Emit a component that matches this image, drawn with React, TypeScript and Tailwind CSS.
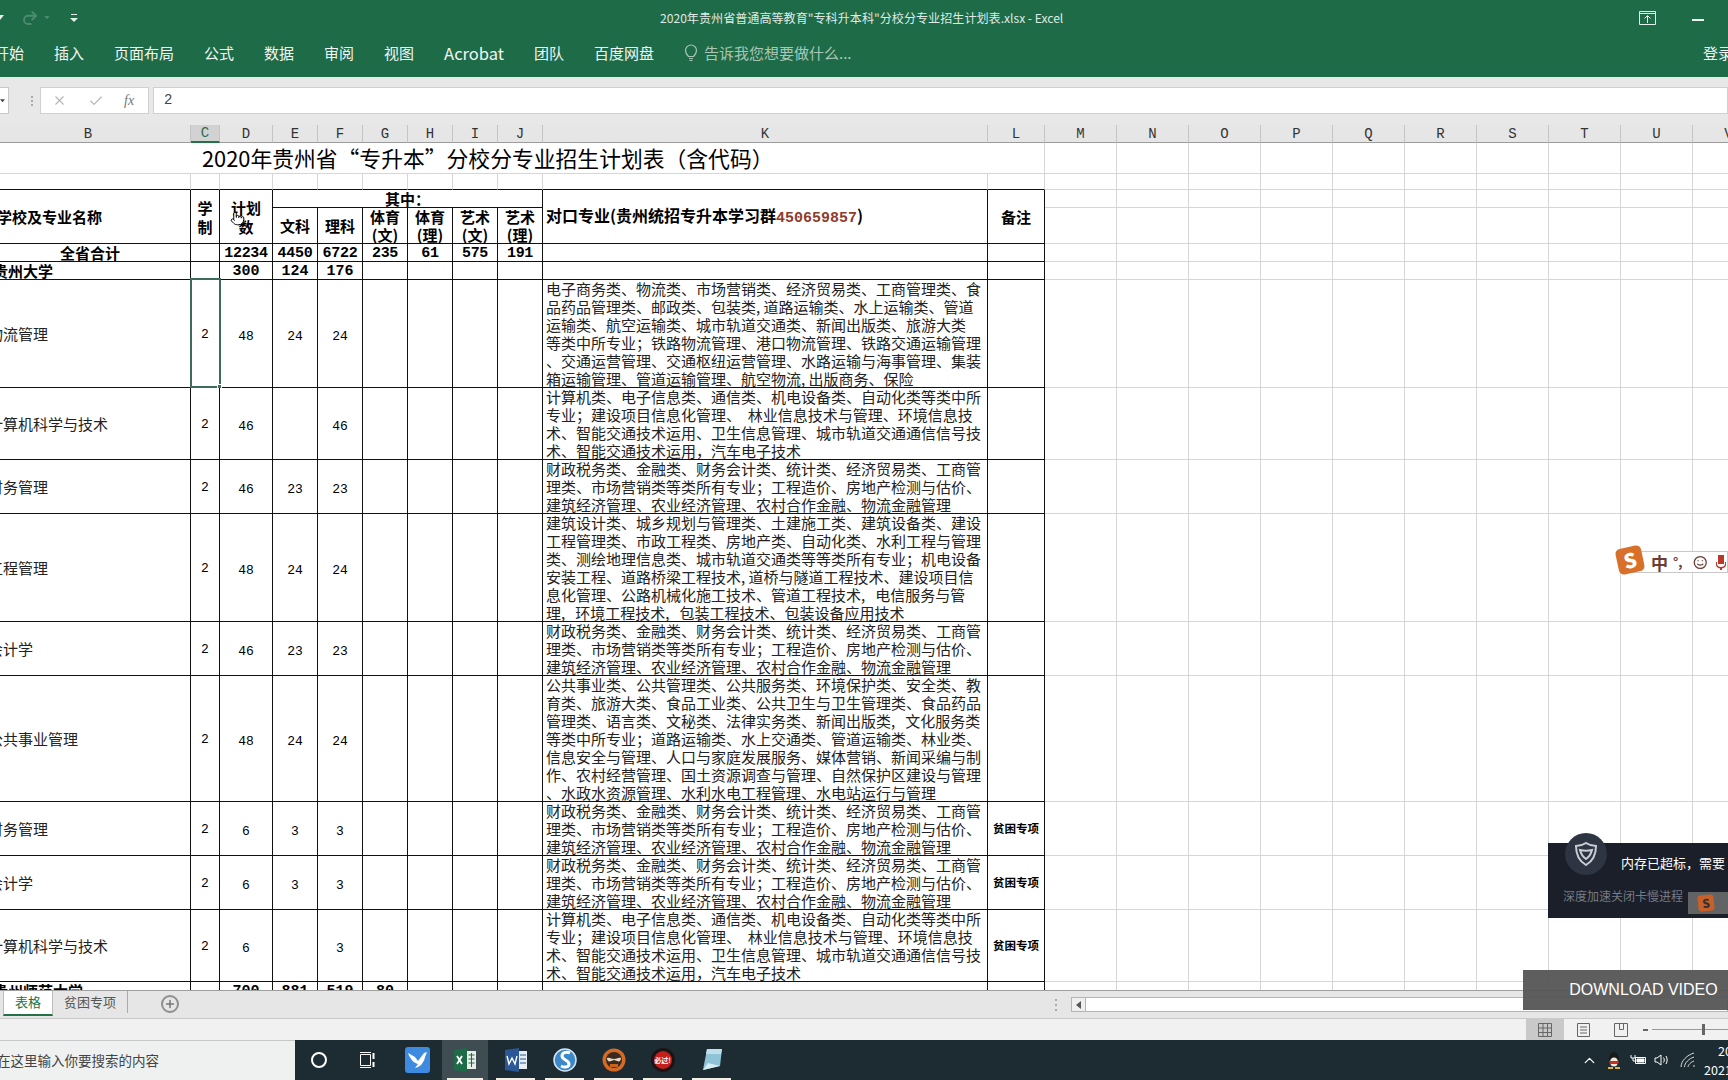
import { Check, ChevronUp, Plus, Pointer, Redo2, X } from 'lucide-react'
import type { ReactNode } from 'react'

const FINANCE = [
  '财政税务类、金融类、财务会计类、统计类、经济贸易类、工商管',
  '理类、市场营销类等类所有专业；工程造价、房地产检测与估价、',
  '建筑经济管理、农业经济管理、农村合作金融、物流金融管理'
]

const COMPUTER = [
  '计算机类、电子信息类、通信类、机电设备类、自动化类等类中所',
  '专业；建设项目信息化管理、  林业信息技术与管理、环境信息技',
  '术、智能交通技术运用、卫生信息管理、城市轨道交通通信信号技',
  '术、智能交通技术运用，汽车电子技术'
]

const rows = [
  {
    name: '物流管理', plan: '48', arts: '24', science: '24', height: 'h-[108px]', selected: true,
    lines: [
      '电子商务类、物流类、市场营销类、经济贸易类、工商管理类、食',
      '品药品管理类、邮政类、包装类, 道路运输类、水上运输类、管道',
      '运输类、航空运输类、城市轨道交通类、新闻出版类、旅游大类',
      '等类中所专业；铁路物流管理、港口物流管理、铁路交通运输管理',
      '、交通运营管理、交通枢纽运营管理、水路运输与海事管理、集装',
      '箱运输管理、管道运输管理、航空物流, 出版商务、保险'
    ]
  },
  { name: '计算机科学与技术', plan: '46', arts: '', science: '46', height: 'h-[72px]', lines: COMPUTER },
  { name: '财务管理', plan: '46', arts: '23', science: '23', height: 'h-[54px]', lines: FINANCE },
  {
    name: '工程管理', plan: '48', arts: '24', science: '24', height: 'h-[108px]',
    lines: [
      '建筑设计类、城乡规划与管理类、土建施工类、建筑设备类、建设',
      '工程管理类、市政工程类、房地产类、自动化类、水利工程与管理',
      '类、测绘地理信息类、城市轨道交通类等等类所有专业；机电设备',
      '安装工程、道路桥梁工程技术, 道桥与隧道工程技术、建设项目信',
      '息化管理、公路机械化施工技术、管道工程技术,   电信服务与管',
      '理,   环境工程技术,   包装工程技术、包装设备应用技术'
    ]
  },
  { name: '会计学', plan: '46', arts: '23', science: '23', height: 'h-[54px]', lines: FINANCE },
  {
    name: '公共事业管理', plan: '48', arts: '24', science: '24', height: 'h-[126px]',
    lines: [
      '公共事业类、公共管理类、公共服务类、环境保护类、安全类、教',
      '育类、旅游大类、食品工业类、公共卫生与卫生管理类、食品药品',
      '管理类、语言类、文秘类、法律实务类、新闻出版类,   文化服务类',
      '等类中所专业；道路运输类、水上交通类、管道运输类、林业类、',
      '信息安全与管理、人口与家庭发展服务、媒体营销、新闻采编与制',
      '作、农村经营管理、国土资源调查与管理、自然保护区建设与管理',
      '、水政水资源管理、水利水电工程管理、水电站运行与管理'
    ]
  },
  { name: '财务管理', plan: '6', arts: '3', science: '3', height: 'h-[54px]', lines: FINANCE, note: '贫困专项' },
  { name: '会计学', plan: '6', arts: '3', science: '3', height: 'h-[54px]', lines: FINANCE, note: '贫困专项' },
  { name: '计算机科学与技术', plan: '6', arts: '', science: '3', height: 'h-[72px]', lines: COMPUTER, note: '贫困专项' }
]

const columns = [
  { label: 'B', width: 'w-[191px]' },
  { label: 'C', width: 'w-[29px]' },
  { label: 'D', width: 'w-[53px]' },
  { label: 'E', width: 'w-[45px]' },
  { label: 'F', width: 'w-[45px]' },
  { label: 'G', width: 'w-[45px]' },
  { label: 'H', width: 'w-[45px]' },
  { label: 'I', width: 'w-[45px]' },
  { label: 'J', width: 'w-[45px]' },
  { label: 'K', width: 'w-[445px]' },
  { label: 'L', width: 'w-[57px]' },
  { label: 'M', width: 'w-[72px]' },
  { label: 'N', width: 'w-[72px]' },
  { label: 'O', width: 'w-[72px]' },
  { label: 'P', width: 'w-[72px]' },
  { label: 'Q', width: 'w-[72px]' },
  { label: 'R', width: 'w-[72px]' },
  { label: 'S', width: 'w-[72px]' },
  { label: 'T', width: 'w-[72px]' },
  { label: 'U', width: 'w-[72px]' },
  { label: 'V', width: 'w-[72px]' }
]

const empties = columns.slice(11)

const grid = 'border-r border-b border-[#d6d6d6]'
const line = 'border-r border-b border-[#111]'
const mono = "font-['Liberation_Mono','Noto_Sans_CJK_SC',monospace]"

const GridCells = () => (
  <>
    {empties.map((c) => (
      <td key={c.label} className={grid} />
    ))}
  </>
)

const Num = ({ value, bold }: { value?: string; bold?: boolean }) => (
  <td className={`${line} p-0 text-center leading-[17px] ${mono} ${bold ? 'text-[15px] font-bold' : 'text-[13px]'} ${value && !bold ? 'pt-[3px]' : ''}`}>
    <span className="relative top-px">{value}</span>
  </td>
)

const Head = ({ children, className = '', rowSpan, colSpan }: { children?: ReactNode; className?: string; rowSpan?: number; colSpan?: number }) => (
  <td rowSpan={rowSpan} colSpan={colSpan} className={`${line} p-0 text-center text-[15px] leading-[17px] font-bold ${className}`}>
    {children}
  </td>
)

const TwoLines = ({ top, bottom }: { top: string; bottom: string }) => (
  <Head>
    <div className="leading-[17.5px]">
      {top}
      <br />
      {bottom}
    </div>
  </Head>
)

const Sheet = () => (
  <div className="h-[865px] shrink-0 overflow-hidden bg-white">
    <table className="w-[1764px] table-fixed border-separate border-spacing-0 text-black">
      <colgroup>
        {columns.map((c) => (
          <col key={c.label} className={c.width} />
        ))}
      </colgroup>
      <tbody>
        <tr className="h-[18px]">
          {columns.map((c, i) => (
            <td
              key={c.label}
              className={`border-r border-b border-r-[#c4c4c4] border-b-[#9b9b9b] p-0 text-center text-[14px] leading-[16px] ${mono} ${
                c.label === 'C' ? 'border-b-2 border-b-[#217346] bg-[#d2d2d2] text-[#2f6a50]' : 'bg-[#e6e6e6] text-[#333]'
              } ${i === 0 ? 'pr-[14px]' : ''}`}
            >
              {c.label}
            </td>
          ))}
        </tr>
        <tr className="h-[31px]">
          <td colSpan={11} className={`${grid} p-0 pl-[202px] text-[21.8px] leading-[30px] whitespace-nowrap`}>
            2020年贵州省“专升本”分校分专业招生计划表（含代码）
          </td>
          <GridCells />
        </tr>
        <tr className="h-[16px]">
          {columns.slice(0, 11).map((c) => (
            <td key={c.label} className="border-r border-b border-r-[#d6d6d6] border-b-[#111]" />
          ))}
          <GridCells />
        </tr>
        <tr className="h-[18px]">
          <Head rowSpan={2} className="text-left">
            <span className="-ml-[3px] block whitespace-nowrap">学校及专业名称</span>
          </Head>
          <Head rowSpan={2}>
            <div className="leading-[19px]">
              学<br />制
            </div>
          </Head>
          <Head rowSpan={2} className="relative">
            <div className="leading-[19px]">
              计划<br />数
            </div>
            <Pointer size={15} strokeWidth={1.6} className="absolute top-[21px] left-[10px] fill-white text-black" />
          </Head>
          <Head colSpan={6}>其中：</Head>
          <Head rowSpan={2} className="pl-[3px] text-left text-[16px] whitespace-nowrap">
            对口专业(贵州统招专升本学习群<span className={`text-[15px] text-[#8f3b2b] ${mono}`}>450659857</span>)
          </Head>
          <Head rowSpan={2}>备注</Head>
          <GridCells />
        </tr>
        <tr className="h-[36px]">
          <Head>文科</Head>
          <Head>理科</Head>
          <TwoLines top="体育" bottom="(文)" />
          <TwoLines top="体育" bottom="(理)" />
          <TwoLines top="艺术" bottom="(文)" />
          <TwoLines top="艺术" bottom="(理)" />
          <GridCells />
        </tr>
        <tr className="h-[18px]">
          <Head className="pr-[10px]">全省合计</Head>
          <Head />
          {['12234', '4450', '6722', '235', '61', '575', '191'].map((v) => (
            <td key={v} className={`${line} p-0 text-center text-[15px] leading-[17px] font-bold tracking-[-0.3px] ${mono}`}>
              <span className="relative top-px">{v}</span>
            </td>
          ))}
          <Head />
          <Head />
          <GridCells />
        </tr>
        <tr className="h-[18px]">
          <Head className="text-left">
            <span className="-ml-[7px] block whitespace-nowrap">贵州大学</span>
          </Head>
          <Head />
          <Num bold value="300" />
          <Num bold value="124" />
          <Num bold value="176" />
          <Num />
          <Num />
          <Num />
          <Num />
          <Head />
          <Head />
          <GridCells />
        </tr>
        {rows.map((r, i) => (
          <tr key={i} className={r.height}>
            <td className={`${line} p-0 pt-[2px] text-[15px] text-[#222]`}>
              <span className="-ml-[12px] block whitespace-nowrap">{r.name}</span>
            </td>
            <td className={`${line} relative p-0 pt-[3px] text-center text-[13px] ${mono}`}>
              2
              {r.selected && (
                <div className="absolute -top-[2px] -left-[1px] h-[110px] w-[31px] border-2 border-[#3f6b5c]">
                  <div className="absolute -right-[3px] -bottom-[3px] h-[5px] w-[5px] border border-white bg-[#3f6b5c]" />
                </div>
              )}
            </td>
            <Num value={r.plan} />
            <Num value={r.arts} />
            <Num value={r.science} />
            <Num />
            <Num />
            <Num />
            <Num />
            <td className={`${line} p-0 pl-[3px] align-top text-[15px] leading-[18px] text-[#222]`}>
              <div className="-mb-px whitespace-pre">
                {r.lines.map((l, j) => (
                  <div key={j}>{l}</div>
                ))}
              </div>
            </td>
            <td className={`${line} p-0 text-center text-[11.5px] font-bold`}>{r.note}</td>
            <GridCells />
          </tr>
        ))}
        <tr className="h-[18px]">
          <Head className="text-left">
            <span className="-ml-[7px] block whitespace-nowrap">贵州师范大学</span>
          </Head>
          <Head />
          <Num bold value="700" />
          <Num bold value="881" />
          <Num bold value="519" />
          <Num bold value="80" />
          <Num />
          <Num />
          <Num />
          <Head />
          <Head />
          <GridCells />
        </tr>
      </tbody>
    </table>
  </div>
)

const menus = ['插入', '页面布局', '公式', '数据', '审阅', '视图']
const moreMenus = ['团队', '百度网盘']

const Ribbon = () => (
  <div className="relative h-[77px] shrink-0 bg-[#1e6b48] text-white">
    <div className="flex h-[36px] items-center">
      <svg width="8" height="6" viewBox="0 0 8 6" className="-ml-[4px] fill-[#e8f0ec]"><path d="M0 0h8L4 5z" /></svg>
      <Redo2 size={18} strokeWidth={2.4} className="ml-[17px] text-[#4d8b6e]" />
      <svg width="6" height="4" viewBox="0 0 8 6" className="ml-[5px] fill-[#4d8b6e]"><path d="M0 0h8L4 5z" /></svg>
      <svg width="8" height="11" viewBox="0 0 8 11" className="ml-[20px] fill-[#e8f0ec]"><path d="M1 1h6v1H1zM0 5h8L4 9z" /></svg>
      <div className="absolute left-[660px] text-[12.1px] whitespace-nowrap text-[#dfeae5]">
        2020年贵州省普通高等教育"专科升本科"分校分专业招生计划表.xlsx - Excel
      </div>
      <svg width="17" height="14" viewBox="0 0 17 14" fill="none" stroke="#e8f0ec" className="mr-[72px] ml-auto">
        <path d="M.5.5h16v13H.5zM.5 2.5h16M8.500 12V5M5.500 7.500l3-3 3 3" />
      </svg>
      <div className="absolute top-[19px] left-[1692px] h-[2px] w-[12px] bg-[#eef4f1]" />
    </div>
    <div className="flex h-[34px] items-center gap-[30px] text-[15px] whitespace-nowrap text-[#f2f6f4]">
      <span className="-ml-[6px]">开始</span>
      {menus.map((m) => (
        <span key={m}>{m}</span>
      ))}
      <span className="text-[16.5px]">Acrobat</span>
      {moreMenus.map((m) => (
        <span key={m}>{m}</span>
      ))}
      <span className="flex items-center gap-[6px] text-[#a9c6b8]">
        <svg width="14" height="18" viewBox="0 0 14 18" fill="none" stroke="currentColor" strokeWidth="1.2">
          <path d="M4.500 12.500C3 11 1.500 9.500 1.500 6.500a5.500 5.500 0 0 1 11 0c0 3-1.500 4.500-3 6zM5 14.500h4M5.500 16.500h3" />
        </svg>
        告诉我您想要做什么...
      </span>
      <span className="absolute left-[1703px]">登录</span>
    </div>
  </div>
)

const FormulaBar = () => (
  <div className="flex h-[48px] shrink-0 bg-[#e7e8e7] pt-[10px]">
    <div className="flex h-[27px] w-[9px] items-center border border-l-0 border-[#c8c8c8] bg-white">
      <svg width="5" height="4" viewBox="0 0 8 6" className="fill-[#444]"><path d="M0 0h8L4 5z" /></svg>
    </div>
    <div className="ml-[14px] flex h-[27px] w-[17px] flex-col items-center justify-center gap-[2px]">
      <i className="h-[2px] w-[2px] bg-[#aaa]" />
      <i className="h-[2px] w-[2px] bg-[#aaa]" />
      <i className="h-[2px] w-[2px] bg-[#aaa]" />
    </div>
    <div className="flex h-[27px] w-[109px] items-center border border-[#d0d0d0] bg-white pl-[11px] text-[#b5b5b5]">
      <X size={15} strokeWidth={1.7} />
      <Check size={16} strokeWidth={1.7} className="ml-[21px]" />
      <span className="ml-[20px] font-['Liberation_Serif',serif] text-[14px] text-[#777] italic">fx</span>
    </div>
    <div className={`ml-[4px] h-[27px] flex-1 border border-[#d0d0d0] bg-white pl-[10px] text-[14px] leading-[25px] text-[#444] ${mono}`}>2</div>
  </div>
)

const SheetTabs = () => (
  <div className="flex h-[28px] shrink-0 border-t border-t-[#9f9f9f] bg-[#e6e6e6] text-[13px]">
    <div className="relative ml-[3px] h-[25px] w-[50px] border-x border-b-2 border-x-[#bbb] border-b-[#217346] bg-white pt-px text-center text-[#217346]">表格</div>
    <div className="h-[22px] w-[75px] border-r border-[#aaa] pt-px text-center text-[#555]">贫困专项</div>
    <div className="mt-[4px] ml-[33px] flex h-[18px] w-[18px] items-center justify-center rounded-full border-2 border-[#8f8f8f] text-[#777]">
      <Plus size={12} strokeWidth={3} />
    </div>
    <div className="mt-[8px] ml-[876px] flex h-[14px] flex-col gap-[3px]">
      <i className="h-[2px] w-[2px] bg-[#aaa]" />
      <i className="h-[2px] w-[2px] bg-[#aaa]" />
      <i className="h-[2px] w-[2px] bg-[#aaa]" />
    </div>
    <div className="mt-[6px] ml-[14px] flex h-[15px] flex-1 border border-[#b4b4b4] bg-white">
      <div className="flex w-[14px] items-center justify-center border-r border-[#b4b4b4] bg-[#efefef]">
        <svg width="5" height="8" viewBox="0 0 5 8" className="fill-[#555]"><path d="M5 0v8L0 4z" /></svg>
      </div>
    </div>
  </div>
)

const StatusBar = () => (
  <div className="flex h-[22px] shrink-0 justify-end border-t border-t-[#c9c9c9] bg-[#f0f1f0]">
    <div className="flex w-[38px] items-center justify-center bg-[#c8c9c8]">
      <svg width="14" height="14" viewBox="0 0 14 14" fill="none" stroke="#666"><path d="M.5.500h13v13H.5zM.5 5h13M.5 9.500h13M5 .5v13M9.500.5v13" /></svg>
    </div>
    <div className="flex w-[38px] items-center justify-center">
      <svg width="13" height="14" viewBox="0 0 13 14" fill="none" stroke="#666"><path d="M.5.500h12v13H.5zM3 4h7M3 7h7M3 10h7" /></svg>
    </div>
    <div className="flex w-[38px] items-center justify-center">
      <svg width="14" height="14" viewBox="0 0 14 14" fill="none" stroke="#666"><path d="M.5.500h13v13H.5zM5.500.5v6h4v-6" /></svg>
    </div>
    <div className="flex w-[88px] items-center">
      <i className="ml-[3px] h-[2px] w-[5px] bg-[#666]" />
      <div className="relative ml-[4px] h-px flex-1 bg-[#999]">
        <i className="absolute -top-[5px] left-[50px] h-[11px] w-[3px] bg-[#666]" />
      </div>
    </div>
  </div>
)

const Slot = ({ children, className = 'w-[49px]' }: { children: ReactNode; className?: string }) => (
  <div className={`relative flex h-full items-center justify-center ${className}`}>
    {children}
    <i className="absolute right-[5px] bottom-0 left-[5px] h-[2px] bg-[#f3efe6]" />
  </div>
)

const Taskbar = () => (
  <div className="flex h-[40px] shrink-0 bg-[#1d2b33]">
    <div className="flex w-[295px] items-center overflow-hidden border-t border-t-[#c8c8c8] bg-[#eff1f0] text-[13.5px] whitespace-nowrap text-[#444]">
      <span className="-ml-[3px]">在这里输入你要搜索的内容</span>
    </div>
    <div className="flex h-full w-[48px] items-center justify-center">
      <div className="h-[16px] w-[16px] rounded-full border-2 border-white" />
    </div>
    <div className="flex h-full w-[49px] items-center justify-center">
      <svg width="18" height="18" viewBox="0 0 18 18" fill="none" stroke="#fff"><path d="M1.500 3.500h10v11h-10zM1 1.500h11M1 16.500h11" /><path d="M14.500 2v6M14.500 11v5" strokeWidth="2" /></svg>
    </div>
    <div className="flex h-full w-[50px] items-center justify-center">
      <svg width="25" height="26" viewBox="0 0 25 26">
        <rect width="25" height="26" rx="3" fill="#3d8be0" />
        <path d="M3 6l7 4 3 4 6-8 3-1-2 5c-1 6-5 10-10 11l3-4c-4-1-8-5-10-11z" fill="#fff" />
      </svg>
    </div>
    <Slot className="w-[46px] bg-[#3f4d53]">
      <svg width="22" height="24" viewBox="0 0 22 24">
        <path d="M0 2l13-2v24L0 22z" fill="#1e6b48" />
        <rect x="13" y="3" width="9" height="18" fill="#e8efe9" />
        <path d="M14.500 7h6M14.500 11h6M14.500 15h6M17.500 5v14" stroke="#1e6b48" />
        <path d="M3 8l5 8M8 8l-5 8" stroke="#fff" strokeWidth="1.8" />
      </svg>
    </Slot>
    <div className="w-[3px]" />
    <Slot>
      <svg width="22" height="24" viewBox="0 0 22 24">
        <path d="M0 2l14-2v24L0 22z" fill="#2b5797" />
        <rect x="14" y="3" width="8" height="18" fill="#e6edf5" />
        <path d="M15 7h6M15 11h6M15 15h6" stroke="#2b5797" />
        <path d="M2 8l2 8 3-6 3 6 2-8" fill="none" stroke="#fff" strokeWidth="1.4" />
      </svg>
    </Slot>
    <Slot>
      <svg width="24" height="24" viewBox="0 0 24 24">
        <circle cx="12" cy="12" r="11" fill="#3d88c9" stroke="#d5e6f2" strokeWidth="1.5" />
        <path d="M17 5c-4-2-8 0-8 3 0 4 7 4 7 8 0 3-4 4-8 2" fill="none" stroke="#fff" strokeWidth="3" />
      </svg>
    </Slot>
    <Slot>
      <svg width="24" height="24" viewBox="0 0 24 24">
        <circle cx="12" cy="12" r="11.500" fill="#d46a25" />
        <circle cx="12" cy="12" r="8" fill="#3a2a20" />
        <path d="M5 10c3-1 4 1 7 1s4-2 7-1c0 3-2 4-4 3l-3-1-3 1c-2 1-4 0-4-3z" fill="#e8d8c0" />
        <path d="M8 16h8v3H8z" fill="#c9641f" />
      </svg>
    </Slot>
    <Slot>
      <div className="flex h-[24px] w-[24px] items-center justify-center rounded-full border-[3px] border-[#1c1414] bg-[#c3201c] text-[7px] leading-none font-bold whitespace-nowrap text-white">必过!</div>
    </Slot>
    <Slot>
      <svg width="24" height="24" viewBox="0 0 24 24">
        <path d="M7 1h15l-2 17-17 4z" fill="#8fc3d8" />
        <path d="M7 1h15l-1 5H6z" fill="#bfe0ea" />
        <path d="M3 22l5-7 12 3z" fill="#d8eef4" />
      </svg>
    </Slot>
    <div className="ml-auto flex h-full items-center">
      <ChevronUp size={17} strokeWidth={1.8} className="text-white" />
      <svg width="16" height="18" viewBox="0 0 16 18" className="ml-[8px]">
        <ellipse cx="8" cy="8" rx="5" ry="7" fill="#1a1a1a" />
        <ellipse cx="8" cy="11" rx="4" ry="4.500" fill="#f3e6dd" />
        <path d="M3 10h10l-1 3H4z" fill="#c7321f" />
        <path d="M2 16h5v2H2zM9 16h5v2H9z" fill="#e3b33b" />
      </svg>
      <svg width="17" height="12" viewBox="0 0 17 12" fill="none" stroke="#fff" className="ml-[8px]"><path d="M5.500 3.500h10v6h-10zM1 1v3h4V1M3 4v3h3" /><path d="M7 5h7v3H7z" fill="#fff" /></svg>
      <svg width="16" height="14" viewBox="0 0 16 14" fill="none" stroke="#fff" className="ml-[7px]"><path d="M1 5v4h2l4 3V2L3 5zM9.500 4.500c1 1.500 1 3.500 0 5M12 3c1.500 2.500 1.500 5.500 0 8" /></svg>
      <svg width="16" height="16" viewBox="0 0 16 16" fill="none" stroke="#d5d8da" className="ml-[10px]"><path d="M1 15C1 9 7 3 14 1M4.500 15C4.500 11 9 6.500 14 5M8 15c0-2 3-5 6-6M14 13v2" /></svg>
      <div className="ml-[8px] w-[24px] text-[12.5px] leading-[19px] whitespace-nowrap text-white">
        <div className="ml-[14px]">20:15</div>
        <div>2021/3/5</div>
      </div>
    </div>
  </div>
)

const Overlays = () => (
  <>
    {/* sogou ime bar */}
    <div className="absolute top-[551px] left-[1630px] flex h-[22px] w-[98px] items-center border border-[#c8c8c8] bg-white/90 pl-[20px] text-[#6b3d34]">
      <span className="text-[17px] leading-none font-bold">中</span>
      <span className="ml-[5px] text-[13px] font-bold">°,</span>
      <svg width="17" height="17" viewBox="0 0 17 17" fill="none" stroke="#6b3d34" strokeWidth="1.5" className="ml-[11px]">
        <circle cx="8.5" cy="8.5" r="7" />
        <path d="M5 10c1 2 6 2 7 0M6 6v1M11 6v1" />
      </svg>
      <svg width="12" height="17" viewBox="0 0 12 17" className="ml-[7px] shrink-0 fill-[#b8382c]"><path d="M3 1h6v9H3zM1 8h1v2c0 4 8 4 8 0V8h1v3c0 2-2 3-4 3.500V16H5v-1.500C3 14 1 13 1 11z" /></svg>
    </div>
    <div className="absolute top-[547px] left-[1617px] flex h-[26px] w-[26px] -rotate-12 items-center justify-center rounded-[5px] bg-[#d9702a] text-[20px] leading-none font-black text-white">S</div>

    {/* memory popup */}
    <div className="absolute top-[843px] left-[1548px] h-[75px] w-[180px] bg-[#1a1f29]">
      <div className="pt-[10px] pl-[73px] text-[13px] leading-[20px] whitespace-nowrap text-white">内存已超标，需要</div>
      <div className="pt-[14px] pl-[15px] text-[12px] leading-[18px] whitespace-nowrap text-[#757b87]">深度加速关闭卡慢进程</div>
      <div className="absolute top-[49px] left-[140px] flex h-[22px] w-[40px] items-center bg-[#6a6a6a]/90 pl-[10px]">
        <span className="flex h-[16px] w-[16px] -rotate-6 items-center justify-center rounded-[3px] bg-[#c8602a] text-[12px] font-black text-[#333]">S</span>
      </div>
    </div>
    <div className="absolute top-[833px] left-[1565px] flex h-[42px] w-[42px] items-center justify-center rounded-full bg-[#2d3543]">
      <svg width="24" height="26" viewBox="0 0 24 26" fill="none" stroke="#c9ced6" strokeWidth="2">
        <path d="M12 2c3 2 6 3 10 3 0 8-3 15-10 19C5 20 2 13 2 5c4 0 7-1 10-3z" />
        <path d="M6 9c4 1 8 1 12 0-1 4-3 7-6 9-3-2-5-5-6-9z" />
      </svg>
    </div>

    <div className="absolute top-[970px] left-[1523px] flex h-[40px] w-[205px] items-center justify-center bg-[#555]/95 pl-[36px] font-['Liberation_Sans',sans-serif] text-[16px] text-white">
      DOWNLOAD VIDEO
    </div>
  </>
)

const App = () => {
  return (
    <div className="relative flex h-[1080px] w-[1728px] flex-col overflow-hidden bg-white font-['Noto_Sans_CJK_SC',sans-serif]">
      <Ribbon />
      <FormulaBar />
      <Sheet />
      <SheetTabs />
      <StatusBar />
      <Taskbar />
      <Overlays />
    </div>
  )
}

export default App
